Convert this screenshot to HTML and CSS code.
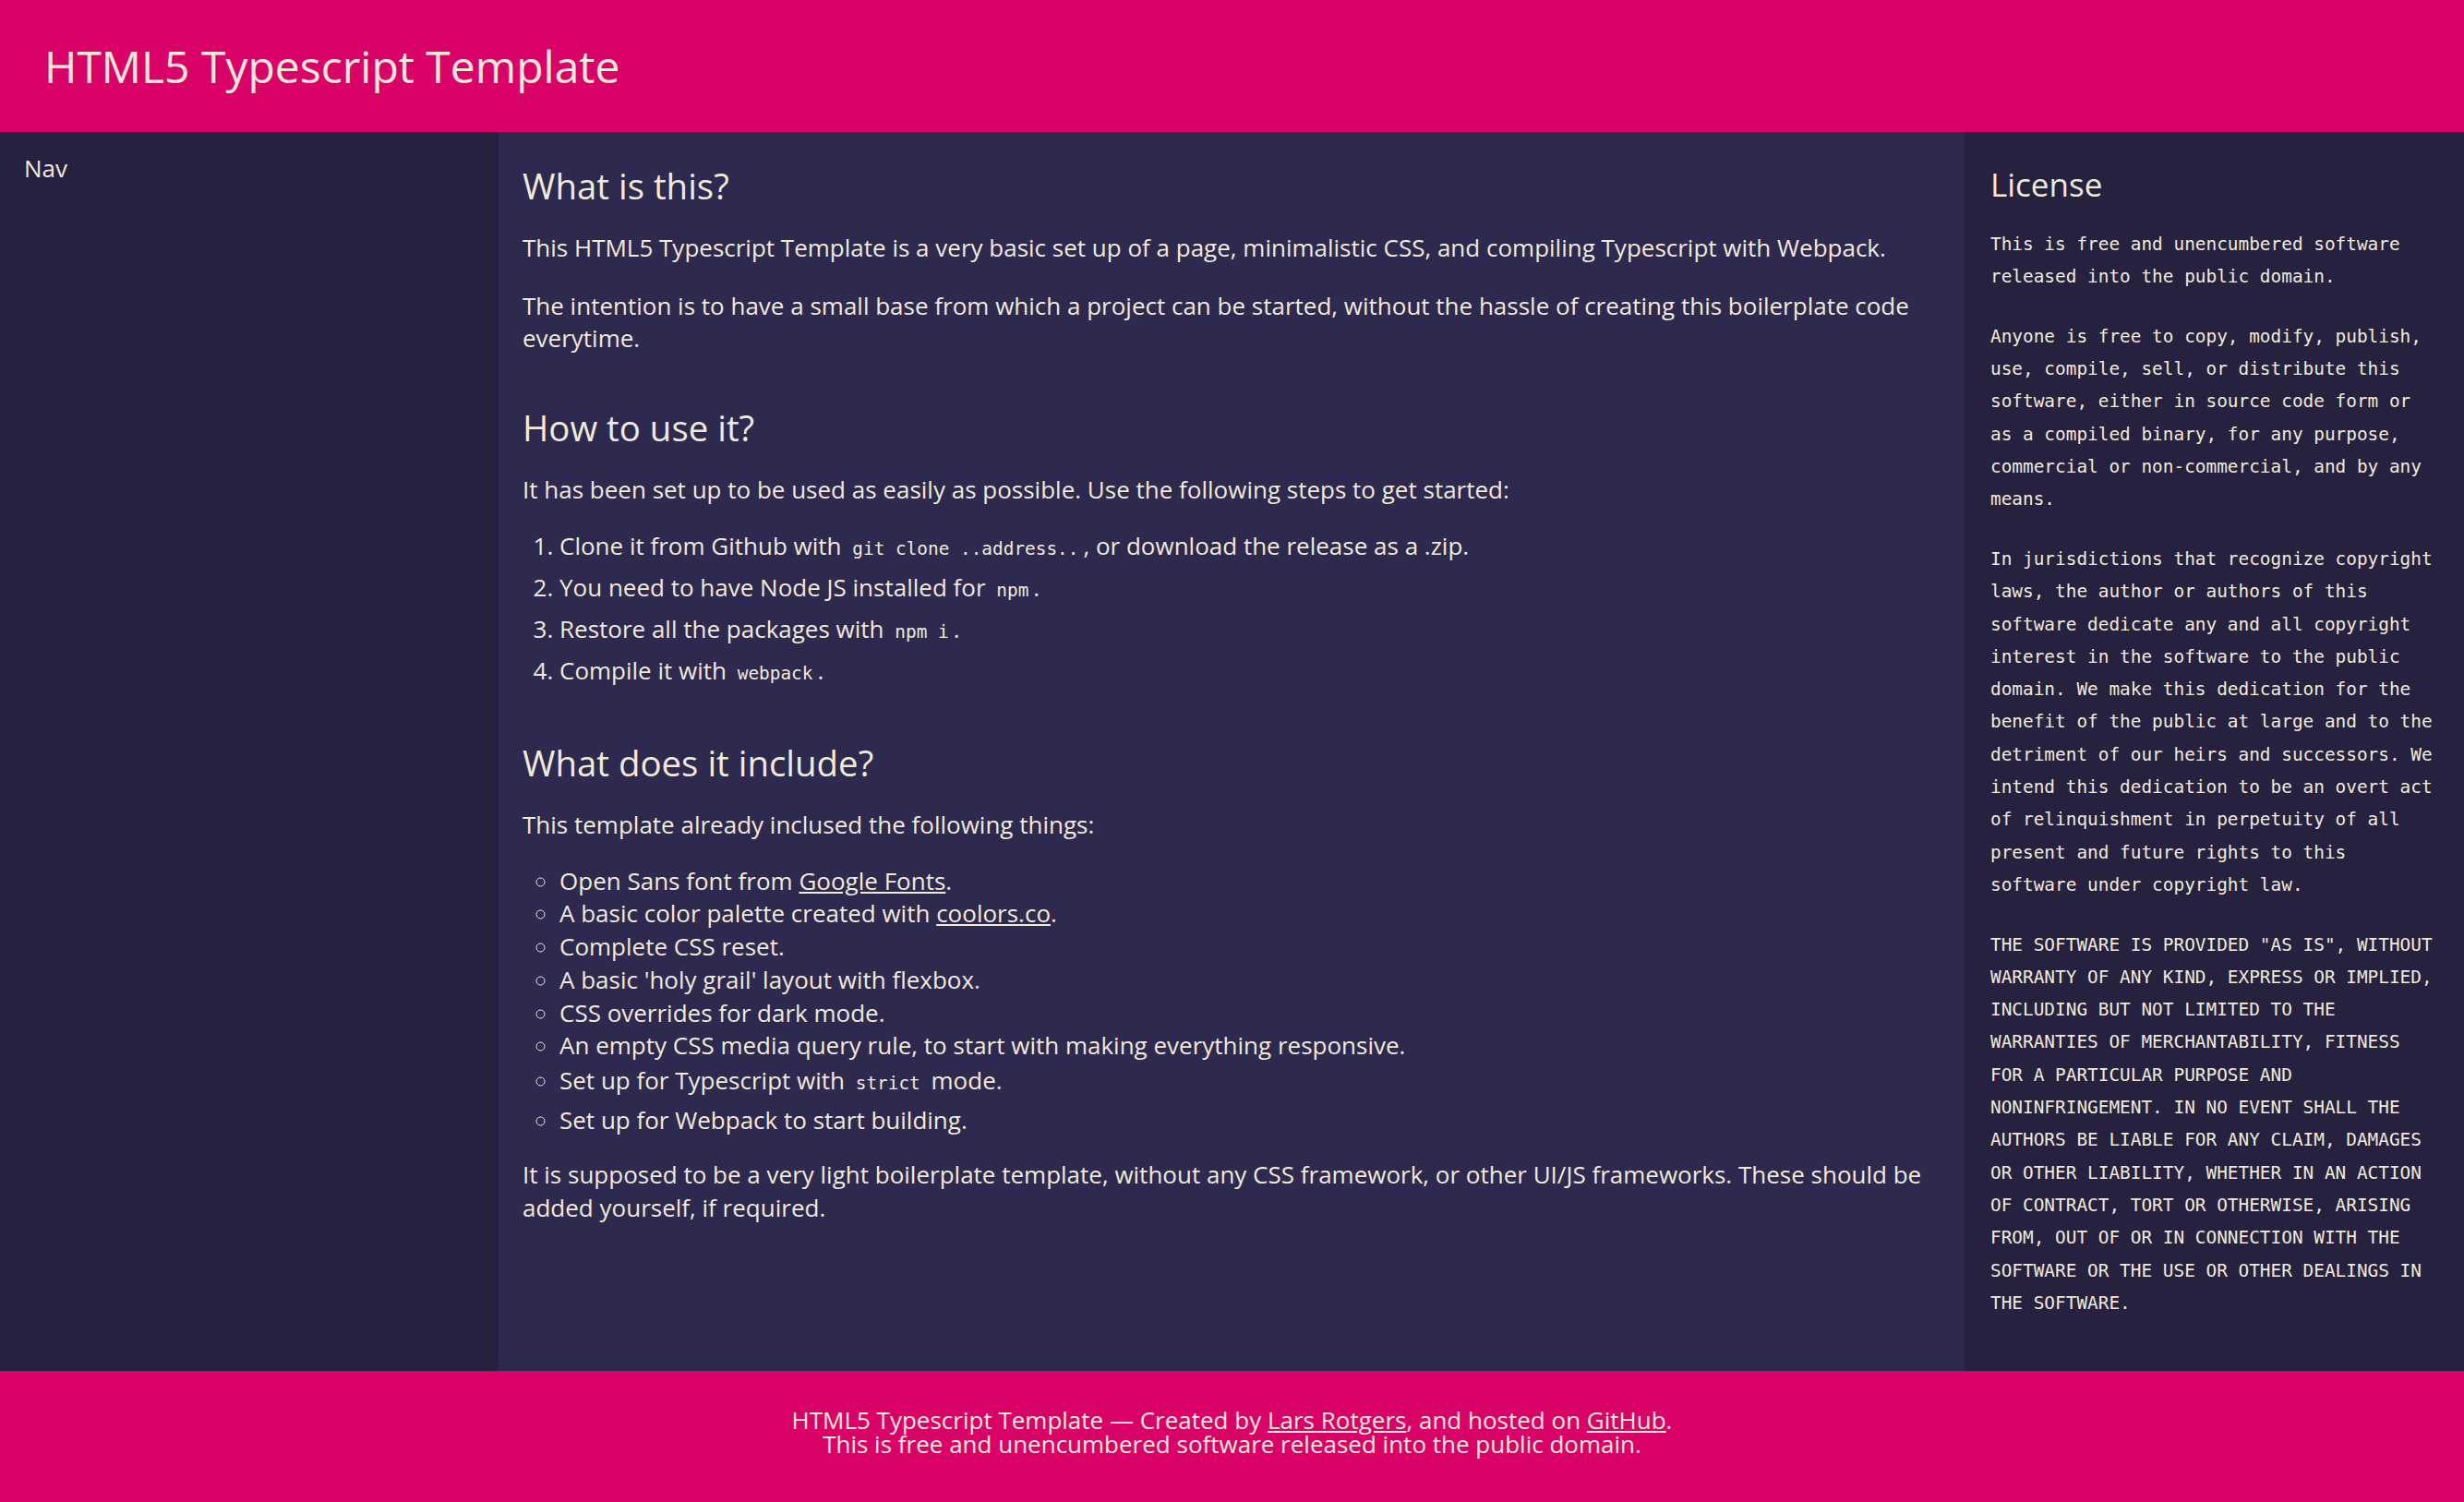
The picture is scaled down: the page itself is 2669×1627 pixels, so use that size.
FILE: index.html
```html
<!DOCTYPE html>
<html lang="en">
<head>
<meta charset="utf-8">
<title>HTML5 Typescript Template</title>
<link rel="stylesheet" href="styles.css">
</head>
<body>
<div class="page">
  <header class="site-header">
    <h1 class="site-title">HTML5 Typescript Template</h1>
  </header>
  <div class="holy">
    <nav class="nav">Nav</nav>
    <main class="main">
      <h2 class="main-h2">What is this?</h2>
      <p class="text">This HTML5 Typescript Template is a very basic set up of a page, minimalistic CSS, and compiling Typescript with Webpack.</p>
      <p class="text">The intention is to have a small base from which a project can be started, without the hassle of creating this boilerplate code everytime.</p>

      <h2 class="main-h2">How to use it?</h2>
      <p class="text">It has been set up to be used as easily as possible. Use the following steps to get started:</p>
      <ol class="list list-steps">
        <li>Clone it from Github with <code class="code">git clone ..address..</code>, or download the release as a .zip.</li>
        <li>You need to have Node JS installed for <code class="code">npm</code>.</li>
        <li>Restore all the packages with <code class="code">npm i</code>.</li>
        <li>Compile it with <code class="code">webpack</code>.</li>
      </ol>

      <h2 class="main-h2">What does it include?</h2>
      <p class="text">This template already inclused the following things:</p>
      <ul class="list list-circle">
        <li>Open Sans font from <a class="link" href="#">Google Fonts</a>.</li>
        <li>A basic color palette created with <a class="link" href="#">coolors.co</a>.</li>
        <li>Complete CSS reset.</li>
        <li>A basic 'holy grail' layout with flexbox.</li>
        <li>CSS overrides for dark mode.</li>
        <li>An empty CSS media query rule, to start with making everything responsive.</li>
        <li>Set up for Typescript with <code class="code">strict</code> mode.</li>
        <li>Set up for Webpack to start building.</li>
      </ul>
      <p class="text">It is supposed to be a very light boilerplate template, without any CSS framework, or other UI/JS frameworks. These should be added yourself, if required.</p>
    </main>
    <aside class="aside">
      <h2 class="aside-h2">License</h2>
      <p class="license">This is free and unencumbered software released into the public domain.</p>
      <p class="license">Anyone is free to copy, modify, publish, use, compile, sell, or distribute this software, either in source code form or as a compiled binary, for any purpose, commercial or non-commercial, and by any means.</p>
      <p class="license">In jurisdictions that recognize copyright laws, the author or authors of this software dedicate any and all copyright interest in the software to the public domain. We make this dedication for the benefit of the public at large and to the detriment of our heirs and successors. We intend this dedication to be an overt act of relinquishment in perpetuity of all present and future rights to this software under copyright law.</p>
      <p class="license">THE SOFTWARE IS PROVIDED "AS IS", WITHOUT WARRANTY OF ANY KIND, EXPRESS OR IMPLIED, INCLUDING BUT NOT LIMITED TO THE WARRANTIES OF MERCHANTABILITY, FITNESS FOR A PARTICULAR PURPOSE AND NONINFRINGEMENT. IN NO EVENT SHALL THE AUTHORS BE LIABLE FOR ANY CLAIM, DAMAGES OR OTHER LIABILITY, WHETHER IN AN ACTION OF CONTRACT, TORT OR OTHERWISE, ARISING FROM, OUT OF OR IN CONNECTION WITH THE SOFTWARE OR THE USE OR OTHER DEALINGS IN THE SOFTWARE.</p>
    </aside>
  </div>
  <footer class="site-footer">
    <div class="footer-line">HTML5 Typescript Template — Created by <a class="link" href="#">Lars Rotgers</a>, and hosted on <a class="link" href="#">GitHub</a>.</div>
    <div class="footer-line">This is free and unencumbered software released into the public domain.</div>
  </footer>
</div>
</body>
</html>
```

FILE: styles.css
```css
* { box-sizing: border-box; }
html, body { margin: 0; padding: 0; }
body {
  font-family: "Open Sans", "Noto Sans", sans-serif;
  font-size: 26px;
  line-height: 35.75px;
  color: #f1e9da;
  background: #2e294e;
}
.page {
  display: grid;
  grid-template-rows: 143px 1fr 142px;
  min-height: 100vh;
}
.site-header {
  background: #d90368;
  display: flex;
  align-items: center;
  padding: 0 48px;
}
.site-title {
  margin: 0;
  font-size: 48px;
  font-weight: 400;
  line-height: 1.2;
  color: #f1e9da;
}
.holy {
  display: grid;
  grid-template-columns: 540px 1fr 541px;
}
.nav {
  background: #25213f;
  padding: 22px 26px;
}
.main {
  background: #2e294e;
  padding: 32px 26px 26px;
}
.aside {
  background: #25213f;
  padding: 32px 28px 26px;
}
.main-h2 {
  font-size: 38.4px;
  font-weight: 400;
  line-height: 1.4;
  margin: 52px 0 22px;
}
.main-h2:first-child { margin-top: 0; }
.aside-h2 {
  font-size: 35px;
  font-weight: 400;
  line-height: 1.4;
  margin: 0 0 23px;
}
.text { margin: 0 0 27px; }
.list {
  margin: -2px 0 23px;
  padding-left: 40px;
}
.list-steps { margin: -4px 0 -4px; }
.list-circle { list-style-type: circle; }
.code {
  font-family: "DejaVu Sans Mono", monospace;
  font-size: 19.4px;
  line-height: 1.4;
  display: inline-block;
  padding: 9px 5px;
}
.license {
  font-family: "DejaVu Sans Mono", monospace;
  font-size: 19.4px;
  line-height: 35.3px;
  margin: 0 0 29.3px;
}
.link { color: inherit; text-decoration: underline; }
.site-footer {
  background: #d90368;
  display: flex;
  flex-direction: column;
  align-items: center;
  padding-top: 40px;
  line-height: 26px;
}
.footer-line { text-align: center; }
```
